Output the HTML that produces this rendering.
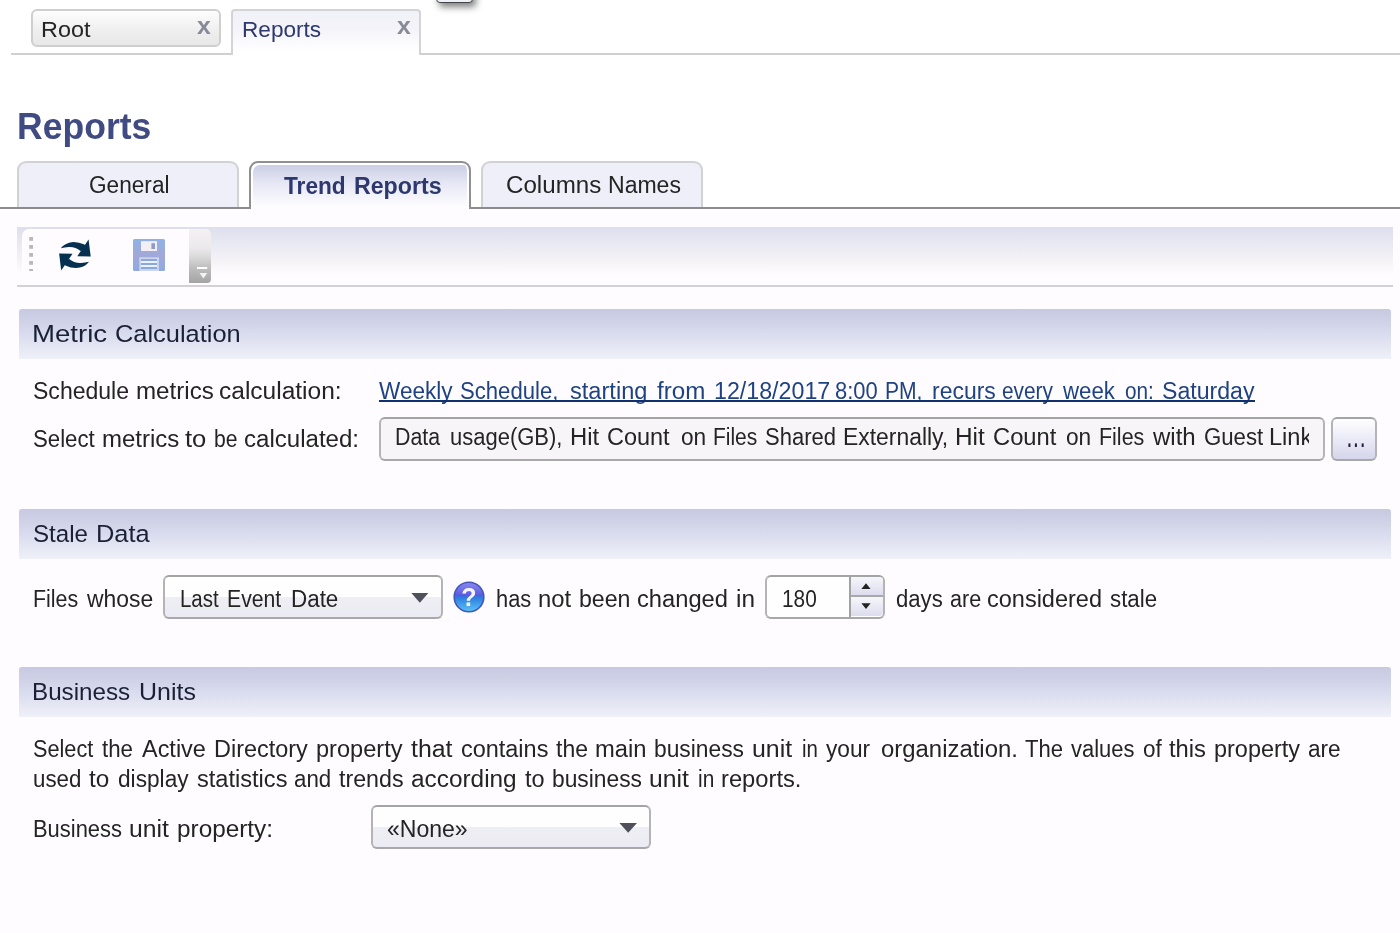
<!DOCTYPE html>
<html>
<head>
<meta charset="utf-8">
<title>Reports</title>
<style>
html,body{margin:0;padding:0;}
body{width:1400px;height:933px;overflow:hidden;background:#fff;position:relative;
  font-family:"Liberation Sans",sans-serif;font-size:23.5px;color:#242424;}
#page{position:absolute;left:0;top:0;width:1400px;height:933px;overflow:hidden;will-change:transform;}
.abs{position:absolute;}
.ln{position:absolute;left:0;white-space:nowrap;line-height:30px;height:30px;}
.w{position:absolute;top:0;white-space:nowrap;transform-origin:0 50%;}
.t{position:absolute;white-space:nowrap;line-height:30px;height:30px;transform-origin:0 50%;}
#lower{left:0;top:208px;width:1400px;height:725px;background:#fefcfe;}
#topline{left:11px;top:53px;width:1389px;height:2px;background:#d0d0d0;}
#popup{left:436px;top:-11px;width:35px;height:12px;border:1px solid #444;border-radius:4px;background:#eef2f8;box-shadow:3px 4px 7px rgba(0,0,0,.5);}
#tabRoot{left:31px;top:9px;width:186px;height:34px;border:2px solid #cfcfcf;border-radius:6px;
  background:linear-gradient(#fdfdfd,#efeeef 60%,#e9e8e9);}
#tabRep{left:231px;top:9px;width:186px;height:44px;border:2px solid #d4d4d6;border-bottom:none;border-radius:4px 4px 0 0;
  background:linear-gradient(#f1f1f8,#f4f3fa 40%,#fff 90%);}
.x{font-weight:bold;font-size:23px;color:#888a98;transform:scaleX(1.08);}
.itab{border:2px solid #d2d2d6;border-bottom:none;border-radius:9px 9px 0 0;background:#eeeff8;}
#tabGen{left:17px;top:161px;width:218px;height:46px;}
#tabCol{left:481px;top:161px;width:218px;height:46px;}
#tabTrend{left:249px;top:161px;width:218px;height:46px;border:2px solid #909090;border-bottom:none;border-radius:9px 9px 0 0;
  background:linear-gradient(#c9cce4,#e6e8f5 45%,#fefcfe 95%);box-shadow:inset 2px 2px 0 0 #fff,inset -2px 0 0 0 #fff;}
#mainline{left:0;top:207px;width:1400px;height:2px;background:#8c8c8c;}
#toolbar{left:17px;top:227px;width:1376px;height:58px;background:linear-gradient(#dddfed,#ebebf3 35%,#f6f3f7 60%,#fefcfe 82%);}
#tbline{left:17px;top:285px;width:1376px;height:2px;background:#d2d2d6;}
#tbinner{left:22px;top:229px;width:170px;height:54px;background:#fefcfe;border-radius:7px 0 0 7px;}
#tbgrip{left:189px;top:229px;width:22px;height:54px;border-radius:0 5px 4px 0;background:linear-gradient(#f3f1f3,#ebe9eb 35%,#dcdcdc 50%,#bebebe 72%,#a4a4a4);}
.hdr{left:19px;width:1372px;height:50px;border-radius:3px 3px 0 0;background:linear-gradient(#c6c9e0,#d9dcee 50%,#eff0f8);}
.box{border:2px solid #b4b4b6;border-top-color:#a4a4a4;border-bottom-color:#a8a8a8;border-radius:6px;background:#f8f5f8;box-sizing:border-box;}
.combo{background:linear-gradient(#fefefe,#fefefe 50%,#eeeef4 50%,#ecebf3);}
.link{color:#1f4283;}
#ul{left:379px;top:400px;width:876px;height:2px;background:#12316c;}
</style>
</head>
<body>
<div id="page">
<div id="lower" class="abs"></div>

<!-- top document tabs -->
<div id="popup" class="abs"></div>
<div id="topline" class="abs"></div>
<div id="tabRoot" class="abs"></div>
<div id="tabRep" class="abs"></div>
<div class="ln" id="tRoot" style="top:14.5px;font-size:21.3px;"><span class="w" style="left:41.4px;transform:scaleX(1.098)">Root</span></div>
<div class="t x" id="xRoot" style="left:197.3px;top:11.3px;">x</div>
<div class="ln" id="tRep" style="top:14.5px;font-size:21.3px;color:#2c386e;"><span class="w" style="left:241.7px;transform:scaleX(1.061)">Reports</span></div>
<div class="t x" id="xRep" style="left:397.3px;top:11.3px;">x</div>

<!-- heading -->
<div class="ln" id="h1" style="top:106.5px;font-size:36.5px;line-height:40px;height:40px;font-weight:bold;color:#3f4b82;"><span class="w" style="left:17.1px;transform:scaleX(0.974)">Reports</span></div>

<!-- inner tabs -->
<div id="tabGen" class="abs itab"></div>
<div id="tabCol" class="abs itab"></div>
<div id="mainline" class="abs"></div>
<div id="tabTrend" class="abs"></div>
<div class="ln" id="tGen" style="top:170px;"><span class="w" style="left:89.0px;transform:scaleX(0.963)">General</span></div>
<div class="ln" id="tTrend" style="top:171px;font-weight:bold;color:#2c386e;"><span class="w" style="left:283.6px;transform:scaleX(0.964)">Trend</span> <span class="w" style="left:353.6px;transform:scaleX(0.986)">Reports</span></div>
<div class="ln" id="tCol" style="top:170px;"><span class="w" style="left:505.6px;transform:scaleX(1.027)">Columns</span> <span class="w" style="left:608.4px;transform:scaleX(0.980)">Names</span></div>

<!-- toolbar -->
<div id="toolbar" class="abs"></div>
<div id="tbline" class="abs"></div>
<div id="tbinner" class="abs"></div>
<div id="tbgrip" class="abs"></div>
<svg class="abs" style="left:0;top:220px;" width="230" height="70" viewBox="0 220 230 70">
  <!-- grip dots -->
  <g fill="#b9b9bb"><rect x="29.2" y="237" width="3.8" height="3.8"/><rect x="29.2" y="245" width="3.8" height="3.8"/><rect x="29.2" y="253" width="3.8" height="3.8"/><rect x="29.2" y="261" width="3.8" height="3.8"/><rect x="29.2" y="269" width="3.8" height="2"/></g>
  <!-- refresh -->
  <g id="arrowUp" fill="#06304f" stroke="none">
    <path d="M60.8 248.2 Q64 243.8 70 242.4 Q77 241.2 84.5 244.6 L86.3 248 L80.5 251 Q75.5 246.6 69 246.9 Q64.5 247.2 60.8 248.2Z"/>
    <path d="M88.6 239.4 L90.7 256.6 L77.3 256.2 Z"/>
  </g>
  <g fill="#06304f" transform="rotate(180 74.9 255)">
    <path d="M60.8 248.2 Q64 243.8 70 242.4 Q77 241.2 84.5 244.6 L86.3 248 L80.5 251 Q75.5 246.6 69 246.9 Q64.5 247.2 60.8 248.2Z"/>
    <path d="M88.6 239.4 L90.7 256.6 L77.3 256.2 Z"/>
  </g>
  <!-- save -->
  <defs><linearGradient id="sv" x1="0" y1="0" x2="0" y2="1"><stop offset="0" stop-color="#8fb2e6"/><stop offset=".5" stop-color="#a2a8d8"/><stop offset="1" stop-color="#8eaae2"/></linearGradient></defs>
  <rect x="133" y="239" width="32" height="32" rx="1.5" fill="url(#sv)"/>
  <rect x="141" y="241.2" width="16" height="9.8" fill="#f3eff5"/>
  <rect x="151.4" y="243.2" width="3.6" height="5.8" fill="#8c9ccb"/>
  <rect x="139.3" y="257.3" width="19.7" height="13.7" fill="#ccd4ee"/>
  <rect x="141" y="259" width="16" height="2" fill="#8aa8d8"/>
  <rect x="141" y="261" width="16" height="2" fill="#e8f3ff"/>
  <rect x="141" y="263" width="16" height="2" fill="#8aa8d8"/>
  <rect x="141" y="265" width="16" height="2" fill="#e8f3ff"/>
  <rect x="141" y="267" width="16" height="2" fill="#8aa8d8"/>
  <!-- overflow marks -->
  <rect x="197" y="267" width="10.2" height="2" fill="#fff"/>
  <path d="M199.5 273 L207.3 273 L203.4 278.5 Z" fill="#f2f2f2"/>
</svg>

<!-- Metric Calculation -->
<div class="abs hdr" style="top:309px;"></div>
<div class="ln" id="tMC" style="top:319px;font-size:24.5px;color:#1c2036;"><span class="w" style="left:32.1px;transform:scaleX(1.127)">Metric</span> <span class="w" style="left:115.0px;transform:scaleX(1.037)">Calculation</span></div>
<div class="ln" id="tSched" style="top:376px;"><span class="w" style="left:32.8px;transform:scaleX(0.980)">Schedule</span> <span class="w" style="left:136.0px;transform:scaleX(1.027)">metrics</span> <span class="w" style="left:219.0px;transform:scaleX(1.043)">calculation:</span></div>
<div class="ln link" id="tLink" style="top:375.5px;"><span class="w" style="left:379.4px;transform:scaleX(0.961)">Weekly</span> <span class="w" style="left:460.4px;transform:scaleX(0.941)">Schedule,</span> <span class="w" style="left:569.7px;transform:scaleX(1.004)">starting</span> <span class="w" style="left:657.0px;transform:scaleX(1.027)">from</span> <span class="w" style="left:714.0px;transform:scaleX(0.988)">12/18/2017</span> <span class="w" style="left:835.1px;transform:scaleX(0.934)">8:00</span> <span class="w" style="left:884.6px;transform:scaleX(0.897)">PM,</span> <span class="w" style="left:931.5px;transform:scaleX(0.977)">recurs</span> <span class="w" style="left:1002.1px;transform:scaleX(0.887)">every</span> <span class="w" style="left:1063.3px;transform:scaleX(0.945)">week</span> <span class="w" style="left:1124.8px;transform:scaleX(0.883)">on:</span> <span class="w" style="left:1162.0px;transform:scaleX(0.983)">Saturday</span></div>
<div id="ul" class="abs"></div>
<div class="ln" id="tSel" style="top:424px;"><span class="w" style="left:32.8px;transform:scaleX(0.945)">Select</span> <span class="w" style="left:101.5px;transform:scaleX(1.021)">metrics</span> <span class="w" style="left:185.0px;transform:scaleX(1.088)">to</span> <span class="w" style="left:213.6px;transform:scaleX(0.898)">be</span> <span class="w" style="left:244.0px;transform:scaleX(1.024)">calculated:</span></div>
<div class="abs box" style="left:379px;top:417px;width:946px;height:44px;"></div>
<div class="ln" id="tData" style="top:422px;width:1309px;overflow:hidden;"><span class="w" style="left:395.3px;transform:scaleX(0.908)">Data</span> <span class="w" style="left:449.7px;transform:scaleX(0.936)">usage(GB),</span> <span class="w" style="left:569.7px;transform:scaleX(1.014)">Hit</span> <span class="w" style="left:607.3px;transform:scaleX(0.999)">Count</span> <span class="w" style="left:680.5px;transform:scaleX(0.965)">on</span> <span class="w" style="left:713.1px;transform:scaleX(0.892)">Files</span> <span class="w" style="left:765.1px;transform:scaleX(0.936)">Shared</span> <span class="w" style="left:843.2px;transform:scaleX(0.974)">Externally,</span> <span class="w" style="left:955.0px;transform:scaleX(1.036)">Hit</span> <span class="w" style="left:992.9px;transform:scaleX(1.010)">Count</span> <span class="w" style="left:1066.0px;transform:scaleX(0.965)">on</span> <span class="w" style="left:1099.4px;transform:scaleX(0.913)">Files</span> <span class="w" style="left:1152.7px;transform:scaleX(1.021)">with</span> <span class="w" style="left:1203.5px;transform:scaleX(0.944)">Guest</span> <span class="w" style="left:1269.0px;transform:scaleX(1.003)">Link</span></div>
<div class="abs box" style="left:1331px;top:417px;width:46px;height:44px;background:linear-gradient(#fefeff,#f3f3fb 30%,#d5d5ec);"></div>
<div class="t" id="tDots" style="left:1346.4px;top:427px;font-size:21px;letter-spacing:0.8px;color:#20203a;transform:scaleY(1.6);transform-origin:0 83%;">...</div>

<!-- Stale Data -->
<div class="abs hdr" style="top:509px;"></div>
<div class="ln" id="tSD" style="top:519px;font-size:24.5px;color:#1c2036;"><span class="w" style="left:32.6px;transform:scaleX(0.985)">Stale</span> <span class="w" style="left:95.9px;transform:scaleX(1.037)">Data</span></div>
<div class="ln" id="tFW" style="top:584px;"><span class="w" style="left:33.2px;transform:scaleX(0.911)">Files</span> <span class="w" style="left:86.5px;transform:scaleX(0.974)">whose</span></div>
<div class="abs box combo" style="left:163px;top:575px;width:280px;height:44px;"></div>
<div class="ln" id="tLED" style="top:584px;"><span class="w" style="left:179.6px;transform:scaleX(0.870)">Last</span> <span class="w" style="left:227.2px;transform:scaleX(0.902)">Event</span> <span class="w" style="left:290.9px;transform:scaleX(0.953)">Date</span></div>
<div class="ln" id="tHas" style="top:584px;"><span class="w" style="left:495.9px;transform:scaleX(0.930)">has</span> <span class="w" style="left:537.7px;transform:scaleX(1.014)">not</span> <span class="w" style="left:579.0px;transform:scaleX(0.984)">been</span> <span class="w" style="left:636.8px;transform:scaleX(1.009)">changed</span> <span class="w" style="left:735.8px;transform:scaleX(1.036)">in</span></div>
<div class="abs box" style="left:765px;top:575px;width:120px;height:44px;background:#fefefe;"></div>
<div class="abs" style="left:849px;top:577px;width:2px;height:40px;background:#a2a2a2;"></div>
<div class="abs" style="left:851px;top:577px;width:32px;height:18px;border-radius:0 4px 0 0;background:linear-gradient(#f6f6fb,#dcdcee);"></div>
<div class="abs" style="left:851px;top:595px;width:32px;height:2px;background:#a8a8a8;"></div>
<div class="abs" style="left:851px;top:597px;width:32px;height:19px;border-radius:0 0 4px 0;background:linear-gradient(#f6f6fb,#dcdcee);"></div>
<svg class="abs" style="left:855px;top:580px;" width="24" height="34" viewBox="855 580 24 34"><path d="M861.4 589 L870.6 589 L866 583.3 Z M861.4 603.3 L870.6 603.3 L866 609 Z" fill="#222"/></svg>
<svg class="abs" style="left:405px;top:588px;" width="30" height="20" viewBox="405 588 30 20"><path d="M411.3 593 L428.4 593 L419.85 602.7 Z" fill="#50505c"/></svg>
<svg class="abs" style="left:450px;top:578px;" width="38" height="38" viewBox="450 578 38 38">
  <defs>
    <linearGradient id="hg" x1="0" y1="0" x2="0" y2="1"><stop offset="0" stop-color="#8a8af0"/><stop offset=".45" stop-color="#5a5ae0"/><stop offset=".5" stop-color="#2a7ae0"/><stop offset="1" stop-color="#5cc4f4"/></linearGradient>
  </defs>
  <circle cx="469" cy="597" r="14.8" fill="url(#hg)" stroke="#4456b8" stroke-width="1.6"/>
  <text x="469" y="606" text-anchor="middle" font-family="Liberation Sans, sans-serif" font-weight="bold" font-size="25" fill="#f4f4fa">?</text>
</svg>
<div class="ln" id="t180" style="top:584px;"><span class="w" style="left:782.2px;transform:scaleX(0.886)">180</span></div>
<div class="ln" id="tDays" style="top:584px;"><span class="w" style="left:896.1px;transform:scaleX(0.941)">days</span> <span class="w" style="left:949.6px;transform:scaleX(0.918)">are</span> <span class="w" style="left:987.0px;transform:scaleX(1.000)">considered</span> <span class="w" style="left:1110.0px;transform:scaleX(0.948)">stale</span></div>

<!-- Business Units -->
<div class="abs hdr" style="top:667px;"></div>
<div class="ln" id="tBU" style="top:677px;font-size:24.5px;color:#1c2036;"><span class="w" style="left:32.0px;transform:scaleX(0.988)">Business</span> <span class="w" style="left:139.4px;transform:scaleX(1.019)">Units</span></div>
<div class="ln" id="tP1" style="top:734px;"><span class="w" style="left:32.5px;transform:scaleX(0.923)">Select</span> <span class="w" style="left:101.6px;transform:scaleX(0.948)">the</span> <span class="w" style="left:141.5px;transform:scaleX(0.998)">Active</span> <span class="w" style="left:213.7px;transform:scaleX(0.997)">Directory</span> <span class="w" style="left:316.0px;transform:scaleX(1.003)">property</span> <span class="w" style="left:411.0px;transform:scaleX(1.059)">that</span> <span class="w" style="left:460.7px;transform:scaleX(0.998)">contains</span> <span class="w" style="left:555.7px;transform:scaleX(0.979)">the</span> <span class="w" style="left:595.0px;transform:scaleX(1.011)">main</span> <span class="w" style="left:654.4px;transform:scaleX(0.970)">business</span> <span class="w" style="left:751.7px;transform:scaleX(1.060)">unit</span> <span class="w" style="left:801.6px;transform:scaleX(0.869)">in</span> <span class="w" style="left:826.0px;transform:scaleX(0.965)">your</span> <span class="w" style="left:880.7px;transform:scaleX(1.017)">organization.</span> <span class="w" style="left:1025.0px;transform:scaleX(0.940)">The</span> <span class="w" style="left:1070.7px;transform:scaleX(0.933)">values</span> <span class="w" style="left:1142.8px;transform:scaleX(0.957)">of</span> <span class="w" style="left:1169.4px;transform:scaleX(1.011)">this</span> <span class="w" style="left:1214.0px;transform:scaleX(0.998)">property</span> <span class="w" style="left:1308.0px;transform:scaleX(0.961)">are</span></div>
<div class="ln" id="tP2" style="top:764px;"><span class="w" style="left:32.5px;transform:scaleX(0.949)">used</span> <span class="w" style="left:88.8px;transform:scaleX(1.034)">to</span> <span class="w" style="left:118.0px;transform:scaleX(0.965)">display</span> <span class="w" style="left:197.2px;transform:scaleX(1.004)">statistics</span> <span class="w" style="left:294.4px;transform:scaleX(0.948)">and</span> <span class="w" style="left:338.9px;transform:scaleX(0.988)">trends</span> <span class="w" style="left:411.0px;transform:scaleX(1.037)">according</span> <span class="w" style="left:524.5px;transform:scaleX(0.999)">to</span> <span class="w" style="left:552.0px;transform:scaleX(0.970)">business</span> <span class="w" style="left:648.6px;transform:scaleX(1.052)">unit</span> <span class="w" style="left:697.5px;transform:scaleX(0.888)">in</span> <span class="w" style="left:720.9px;transform:scaleX(1.010)">reports.</span></div>
<div class="ln" id="tBUP" style="top:814px;"><span class="w" style="left:33.2px;transform:scaleX(0.933)">Business</span> <span class="w" style="left:129.0px;transform:scaleX(1.052)">unit</span> <span class="w" style="left:177.4px;transform:scaleX(1.035)">property:</span></div>
<div class="abs box combo" style="left:371px;top:805px;width:280px;height:44px;"></div>
<div class="ln" id="tNone" style="top:814px;"><span class="w" style="left:387.4px;transform:scaleX(0.980)">«None»</span></div>
<svg class="abs" style="left:613px;top:818px;" width="30" height="20" viewBox="613 818 30 20"><path d="M619.4 823 L637 823 L628.2 832.7 Z" fill="#50505c"/></svg>
</div>
</body>
</html>
